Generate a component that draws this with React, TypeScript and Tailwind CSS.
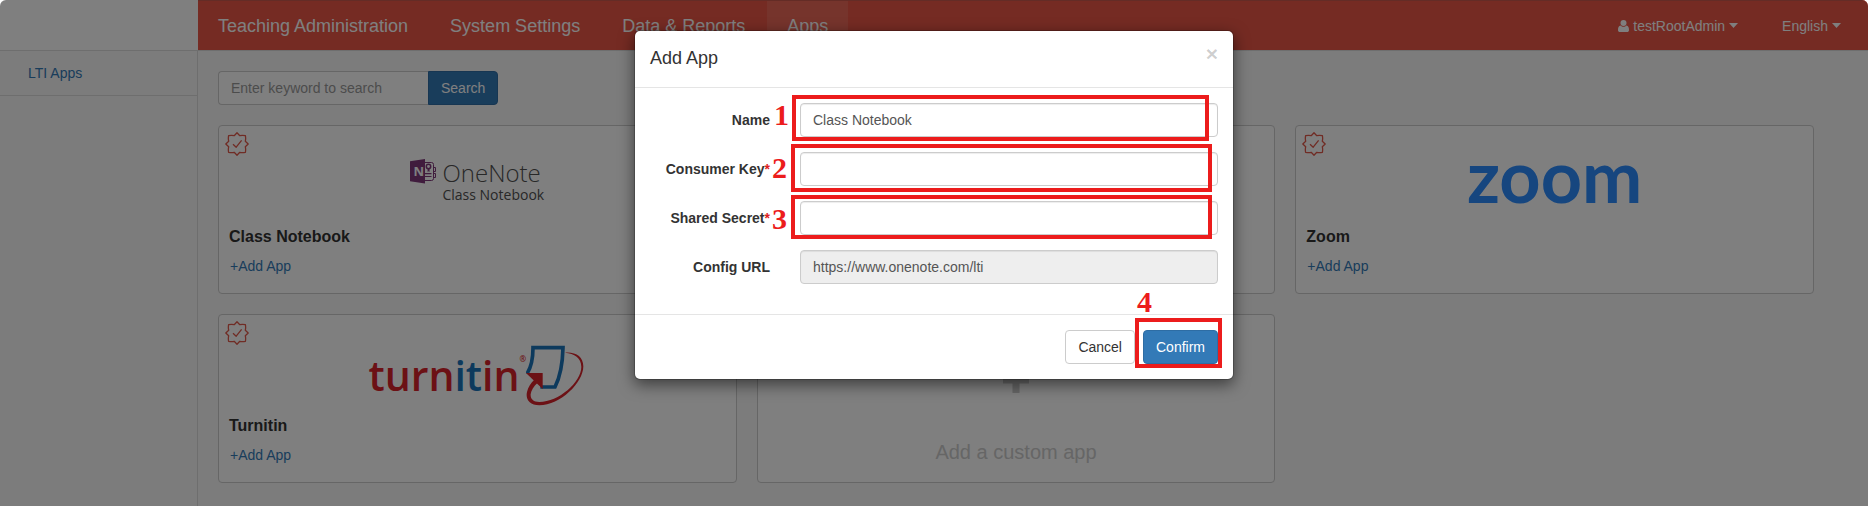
import type { ReactNode } from 'react';

function Caret() {
  return (
    <svg width="9" height="5" viewBox="0 0 9 5" className="ml-1 shrink-0" aria-hidden="true">
      <path d="M0 0h9L4.500 5z" fill="currentColor" />
    </svg>
  );
}

function UserIcon() {
  return (
    <svg width="11" height="12" viewBox="0 0 11 12" className="mr-1 shrink-0" aria-hidden="true">
      <circle cx="5.500" cy="3" r="3" fill="currentColor" />
      <path
        d="M2.600 5.400C3.300 6.200 4.300 6.700 5.500 6.700S7.700 6.200 8.400 5.400C10.300 5.600 11 7.400 11 9.900 11 11.200 10.200 12 9 12H2C.8 12 0 11.200 0 9.900 0 7.400.7 5.600 2.600 5.400z"
        fill="currentColor"
      />
    </svg>
  );
}

function VerifiedBadge() {
  return (
    <svg
      width="24"
      height="24"
      viewBox="0 0 24 24"
      className="absolute left-1.5 top-1.5"
      fill="none"
      stroke="#e0594a"
      strokeWidth="1.300"
      strokeLinejoin="round"
      aria-hidden="true"
    >
      <path d="M12 0.800 L14.800 3.700 C16.500 3.200 18.600 3.300 20.400 3.600 C20.700 5.400 20.800 7.500 20.300 9.200 L23.200 12 L20.300 14.800 C20.800 16.500 20.700 18.600 20.400 20.400 C18.600 20.700 16.500 20.800 14.800 20.300 L12 23.200 L9.200 20.300 C7.500 20.800 5.400 20.700 3.600 20.400 C3.300 18.600 3.200 16.500 3.700 14.800 L0.800 12 L3.700 9.200 C3.200 7.500 3.300 5.400 3.600 3.600 C5.400 3.300 7.500 3.200 9.200 3.700 Z" />
      <path d="M8 12.200 L11.200 15.200 L16.600 8.300" />
    </svg>
  );
}

function OneNoteLogo() {
  return (
    <div className="flex items-start gap-1.5 font-['Open_Sans',sans-serif] text-[#505050]">
      <div className="relative">
        <svg width="26" height="26" viewBox="0 0 26 26" aria-hidden="true">
          <path d="M13 4.500 H21.500 a2 2 0 0 1 2 2 V20.500 a2 2 0 0 1-2 2 H13" fill="none" stroke="#80397b" strokeWidth="1" />
          <path d="M23.500 9.500h2v4h-2M23.500 15.500h2v4h-2" fill="none" stroke="#80397b" strokeWidth="1" />
          <circle cx="18.500" cy="8.500" r="2.200" fill="none" stroke="#80397b" strokeWidth="1.500" />
          <path d="M17.600 10.500h1.900v3.500l-1-.8-.9.8z" fill="#80397b" />
          <path d="M15 15.700h6.500M15 18.500h6.500" stroke="#80397b" strokeWidth="1.200" />
          <path d="M0 3.300 L15 1 V25.500 L0 23.300Z" fill="#80397b" />
        </svg>
        <span className="absolute left-[3px] top-1.5 text-[13px] font-bold leading-[14px] text-white">N</span>
      </div>
      <div>
        <div className="text-[24px] font-light leading-[30px]">OneNote</div>
        <div className="text-[14px] leading-[14px]">Class Notebook</div>
      </div>
    </div>
  );
}

function ZoomLogo() {
  return <div className="font-[Lato,sans-serif] text-[72px] font-bold leading-[66px] text-[#2d8cff]">zoom</div>;
}

function TurnitinLogo() {
  return (
    <div className="flex items-start">
      <div className="flex font-['Open_Sans',sans-serif] text-[41px] font-semibold leading-[60px] text-[#d8232a]">
        <span>turn</span>
        <span className="text-[#1b75bb]">it</span>
        <span>in</span>
        <span className="text-[8px] leading-[28px]">®</span>
      </div>
      <svg width="60" height="62" viewBox="505 32 180 186" aria-hidden="true">
        <path
          d="M508 118 C521 98 526 74 526 40 H616 C615 84 609 124 592 158 H548"
          fill="none"
          stroke="#1b75bb"
          strokeWidth="11"
        />
        <path
          d="M622 55 C654 52 677 67 677 96 C677 145 608 213 545 213 C515 213 503 194 508 173 C511 158 520 145 530 136 L540 145 C528 156 520 168 519 180 C518 194 527 203 545 203 C603 203 671 143 671 98 C671 70 650 58 622 55Z"
          fill="#d8232a"
        />
        <path d="M505 116 H555 V164Z" fill="#d8232a" />
      </svg>
    </div>
  );
}

function AppCard({ title, children }: { title: string; children: ReactNode }) {
  return (
    <article className="relative flex h-[169px] flex-col rounded border border-[#ccc] bg-white pl-2.5">
      <VerifiedBadge />
      <div className="flex h-[99px] items-start justify-center pr-2.5">{children}</div>
      <h2 className="text-base font-bold leading-6 text-[#333]">{title}</h2>
      <a href="#add" className="mt-[7px] self-start pl-px text-sm leading-5 text-[#337ab7]">
        +Add App
      </a>
    </article>
  );
}

const navItems = ['Teaching Administration', 'System Settings', 'Data & Reports', 'Apps'];

function Header() {
  return (
    <header className="flex h-[50px] justify-between border-t border-[#c8584c] bg-[#ea5747] text-white">
      <nav className="flex gap-0.5 text-lg">
        {navItems.map((item) => (
          <a
            key={item}
            href="#nav"
            className={item === 'Apps' ? 'flex items-center bg-white/10 px-5' : 'flex items-center px-5'}
          >
            {item}
          </a>
        ))}
      </nav>
      <div className="flex items-center gap-11 pr-[27px] text-sm">
        <button type="button" className="flex items-center">
          <UserIcon />
          testRootAdmin
          <Caret />
        </button>
        <button type="button" className="flex items-center">
          English
          <Caret />
        </button>
      </div>
    </header>
  );
}

const inputClass =
  'h-[34px] w-full rounded border border-[#ccc] bg-white px-3 text-sm text-[#555] shadow-[inset_0_1px_1px_rgba(0,0,0,0.075)] read-only:bg-[#eee] outline-none';

function Field({
  id,
  label,
  required,
  value,
  readOnly,
  children,
}: {
  id: string;
  label: string;
  required?: boolean;
  value?: string;
  readOnly?: boolean;
  children?: ReactNode;
}) {
  return (
    <div className="relative flex items-center gap-[30px]">
      <label htmlFor={id} className="w-[120px] shrink-0 text-right font-bold text-[#333]">
        {label}
        {required && <span className="text-[#e02020]">*</span>}
      </label>
      <input id={id} type="text" defaultValue={value} readOnly={readOnly} className={inputClass} />
      {children}
    </div>
  );
}

const markClass = "pointer-events-none absolute font-['Liberation_Serif',serif] text-[30px] font-bold leading-8 text-[#ec1c1c]";
const frameClass = 'pointer-events-none absolute border-4 border-[#ec1c1c]';

function AddAppDialog() {
  return (
    <div className="absolute inset-x-0 top-[30px] flex justify-center">
      <div
        role="dialog"
        aria-label="Add App"
        className="w-[600px] rounded-md border border-black/20 bg-white bg-clip-padding text-sm shadow-[0_5px_15px_rgba(0,0,0,0.5)]"
      >
        <div className="flex h-[57px] items-start justify-between border-b border-[#e5e5e5] p-[15px]">
          <h1 className="text-lg leading-6 text-[#333]">Add App</h1>
          <button type="button" aria-label="Close" className="text-[21px] font-bold leading-4 text-black/20">
            ×
          </button>
        </div>
        <form className="flex flex-col gap-[15px] px-[15px] pb-[30px] pt-[15px]">
          <Field id="name" label="Name" value="Class Notebook">
            <span className={`${markClass} left-[124px] top-[-4px]`}>1</span>
            <span className={`${frameClass} -bottom-1 -top-2 left-[142px] right-[9px]`} />
          </Field>
          <Field id="key" label="Consumer Key" required>
            <span className={`${markClass} left-[122px] top-0`}>2</span>
            <span className={`${frameClass} -bottom-1.5 -top-2 left-[141px] right-[6px]`} />
          </Field>
          <Field id="secret" label="Shared Secret" required>
            <span className={`${markClass} left-[122px] top-0.5`}>3</span>
            <span className={`${frameClass} -bottom-1 -top-1.5 left-[141px] right-[6px]`} />
          </Field>
          <Field id="url" label="Config URL" value="https://www.onenote.com/lti" readOnly />
        </form>
        <div className="flex justify-end gap-2 border-t border-[#e5e5e5] p-[15px]">
          <button type="button" className="h-[34px] rounded border border-[#ccc] px-3 text-[#333]">
            Cancel
          </button>
          <div className="relative">
            <button type="button" className="h-[34px] rounded border border-[#2e6da4] bg-[#337ab7] px-3 text-white">
              Confirm
            </button>
            <span className={`${markClass} -left-1.5 -top-11`}>4</span>
            <span className={`${frameClass} -bottom-1 -left-2 -right-1 -top-3`} />
          </div>
        </div>
      </div>
    </div>
  );
}

export default function App() {
  return (
    <div className="relative min-h-screen overflow-hidden rounded-t-md bg-[#f8f8f8] font-['Liberation_Sans',Arial,sans-serif] text-sm">
      <div className="flex min-h-screen">
        <aside className="flex w-[198px] shrink-0 flex-col">
          <div className="h-[50px] bg-white" />
          <nav className="grow border-r border-t border-[#dcdcdc]">
            <a
              href="#lti"
              className="flex h-[45px] items-center border-b border-[#dcdcdc] pl-7 text-[#337ab7]"
            >
              LTI Apps
            </a>
          </nav>
        </aside>
        <div className="flex grow flex-col">
          <Header />
          <main className="border-t border-[#dcdcdc] pb-5 pl-5 pr-[54px] pt-5">
            <form className="flex">
              <input
                type="text"
                aria-label="Search apps"
                placeholder="Enter keyword to search"
                className="h-[34px] w-[210px] rounded-l border border-r-0 border-[#ccc] bg-white px-3 text-sm placeholder:text-[#999]"
              />
              <button type="button" className="h-[34px] rounded-r border border-[#2e6da4] bg-[#337ab7] px-3 text-white">
                Search
              </button>
            </form>
            <section className="mt-5 grid grid-cols-3 gap-5">
              <AppCard title="Class Notebook">
                <div className="pt-8">
                  <OneNoteLogo />
                </div>
              </AppCard>
              <article className="rounded border border-[#ccc] bg-white" />
              <AppCard title="Zoom">
                <div className="pt-4">
                  <ZoomLogo />
                </div>
              </AppCard>
              <AppCard title="Turnitin">
                <div className="pt-[30px]">
                  <TurnitinLogo />
                </div>
              </AppCard>
              <button
                type="button"
                className="flex flex-col items-center rounded border border-[#ccc] bg-white pt-[52px] text-xl text-[#ccc]"
              >
                <svg width="26" height="26" viewBox="0 0 26 26" aria-hidden="true">
                  <path d="M9.500 0h7v9.500H26v7h-9.500V26h-7v-9.500H0v-7h9.500z" fill="currentColor" />
                </svg>
                <span className="mt-[45px]">Add a custom app</span>
              </button>
            </section>
          </main>
        </div>
      </div>
      <div className="absolute inset-0 bg-black/50" />
      <AddAppDialog />
    </div>
  );
}
